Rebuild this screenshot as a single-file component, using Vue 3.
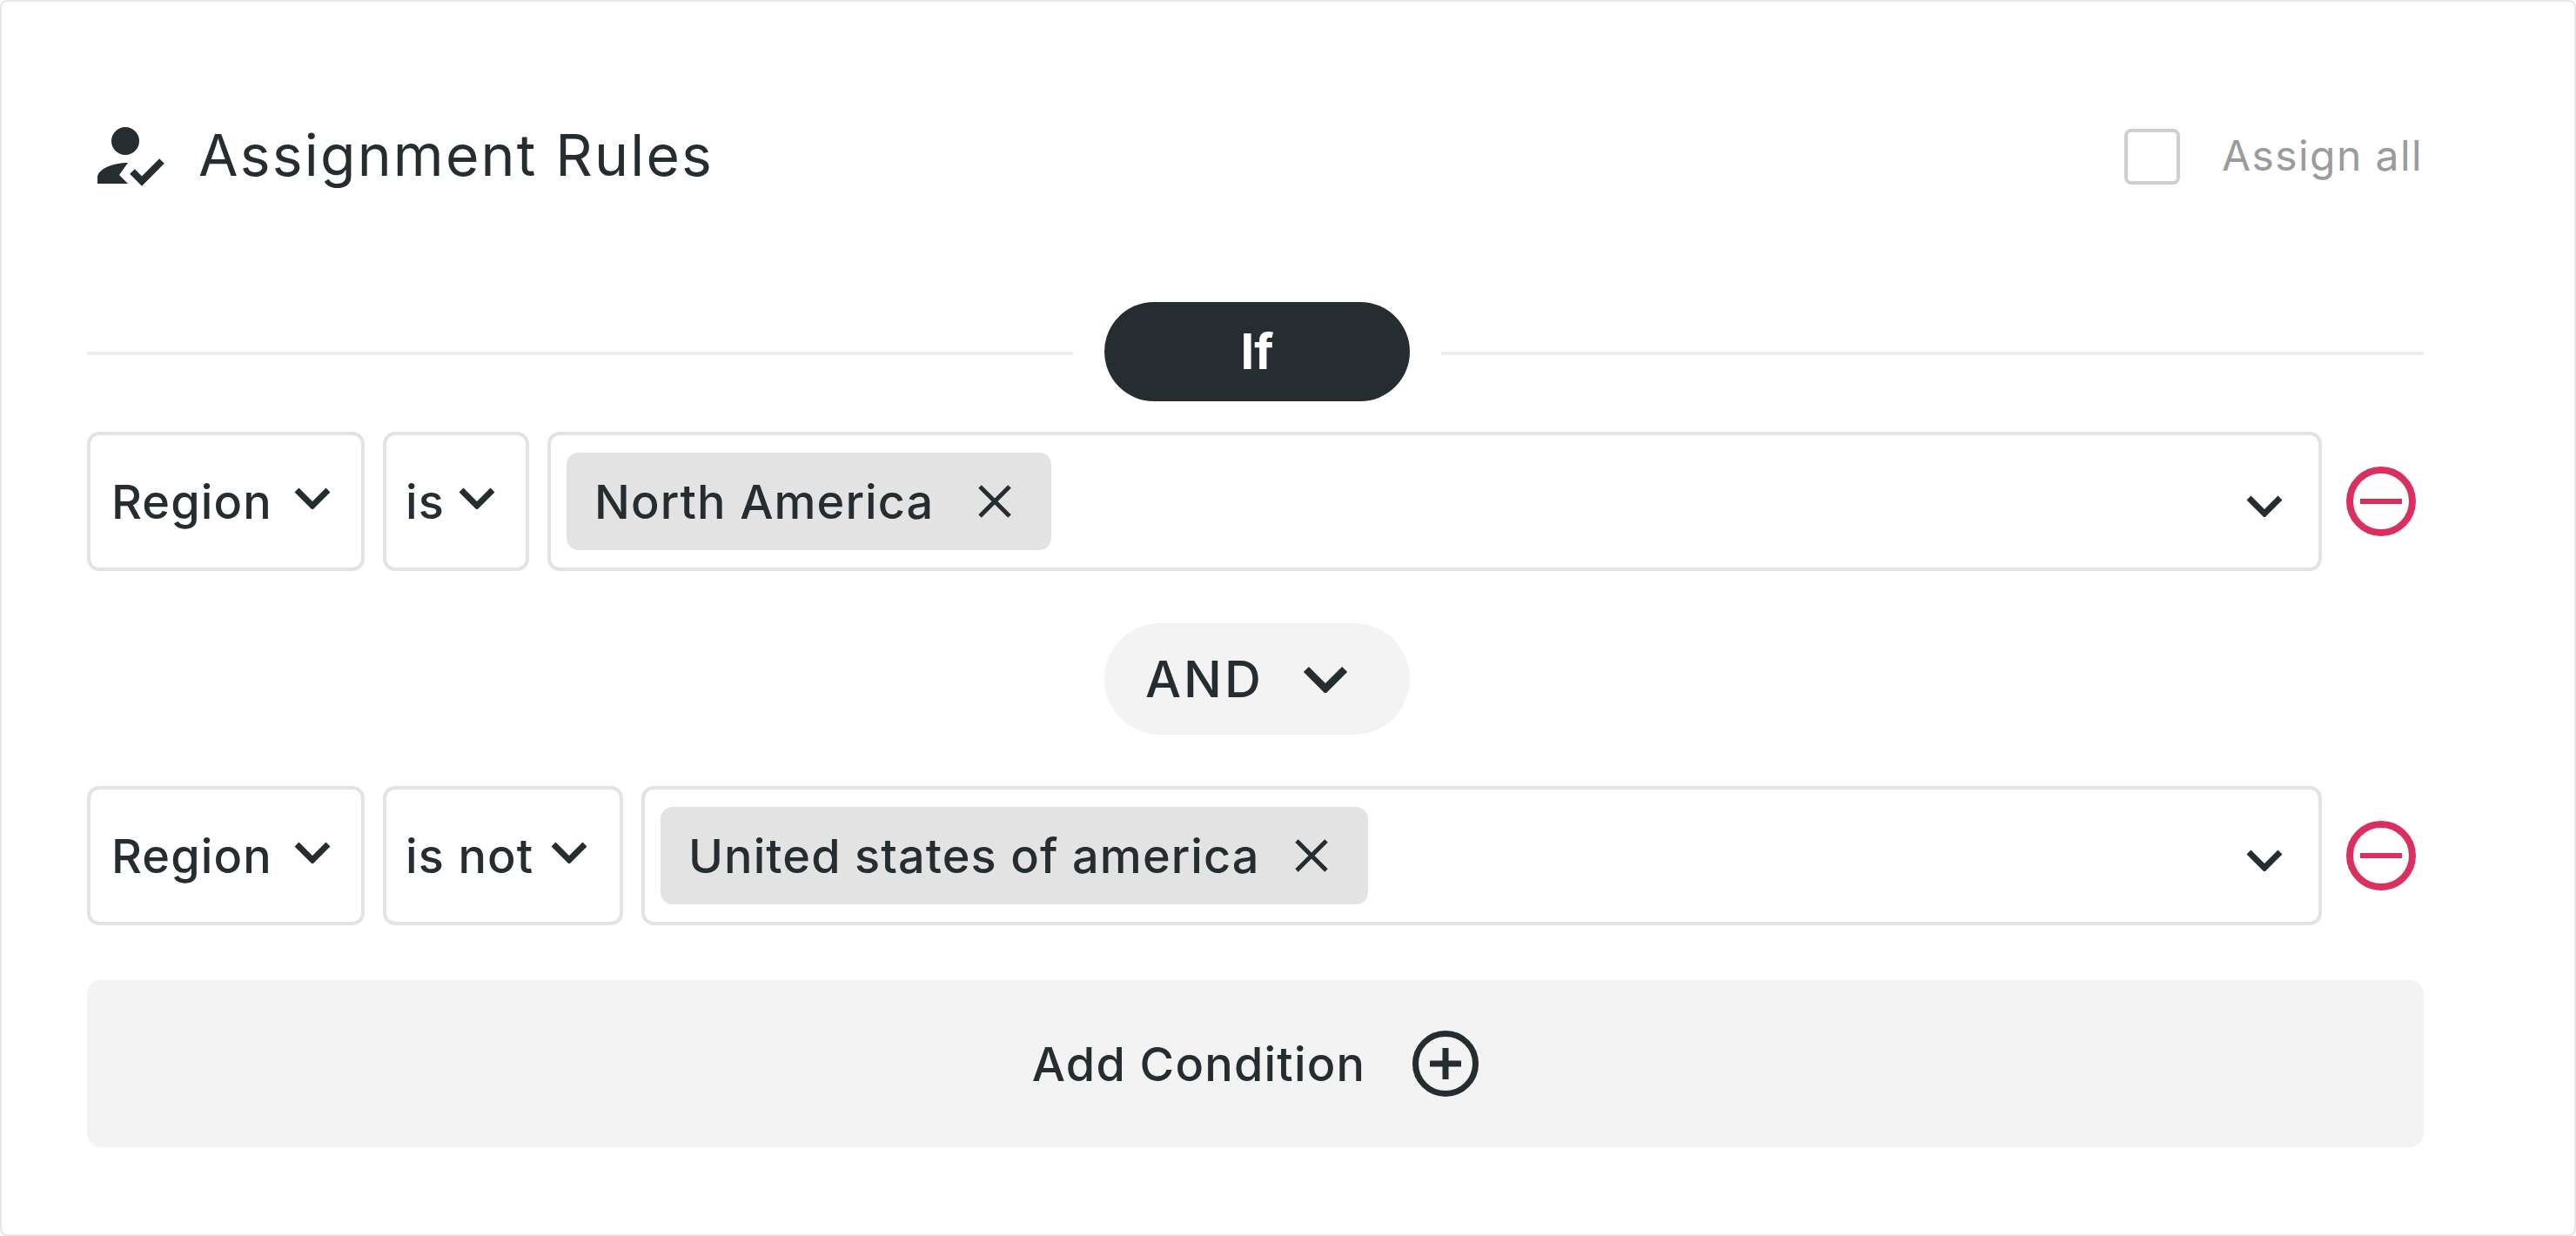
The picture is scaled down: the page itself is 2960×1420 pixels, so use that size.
<template>
  <div class="card">
    <div class="header">
      <svg class="rules-icon" viewBox="100 145 92 72">
        <circle cx="144" cy="163" r="16" fill="#252d30" />
        <path d="M112 212 V205 C112 195 130 188 147 188 L137 202 L147 212 Z" fill="#252d30" />
        <path d="M152 198 L163 209 L186 186" fill="none" stroke="#252d30" stroke-width="8" />
      </svg>
      <span class="title">Assignment Rules</span>
      <label class="assign-all">
        <span class="checkbox"></span>
        <span class="assign-text">Assign all</span>
      </label>
    </div>

    <div class="if-row">
      <div class="line line-left"></div>
      <div class="if-pill">If</div>
      <div class="line"></div>
    </div>

    <div class="condition first">
      <div class="select field-wide">
        <span>Region</span>
        <svg class="chev" viewBox="0 0 44 26"><path d="M4 4 L22 22 L40 4" /></svg>
      </div>
      <div class="select op-is">
        <span>is</span>
        <svg class="chev" viewBox="0 0 44 26"><path d="M4 4 L22 22 L40 4" /></svg>
      </div>
      <div class="values">
        <div class="chip chip-na">
          <span>North America</span>
          <svg class="chip-x" viewBox="0 0 40 40"><path d="M3 3 L37 37 M37 3 L3 37" /></svg>
        </div>
        <svg class="chev values-chev" viewBox="0 0 44 26"><path d="M4 4 L22 22 L40 4" /></svg>
      </div>
      <svg class="remove" viewBox="0 0 80 80">
        <circle cx="40" cy="40" r="36" />
        <path d="M16 40 H64" />
      </svg>
    </div>

    <div class="and-row">
      <div class="and-pill">
        <span>AND</span>
        <svg class="chev and-chev" viewBox="0 0 44 26"><path d="M4 4 L22 22 L40 4" /></svg>
      </div>
    </div>

    <div class="condition second">
      <div class="select field-wide">
        <span>Region</span>
        <svg class="chev" viewBox="0 0 44 26"><path d="M4 4 L22 22 L40 4" /></svg>
      </div>
      <div class="select op-not">
        <span>is not</span>
        <svg class="chev" viewBox="0 0 44 26"><path d="M4 4 L22 22 L40 4" /></svg>
      </div>
      <div class="values">
        <div class="chip chip-us">
          <span>United states of america</span>
          <svg class="chip-x" viewBox="0 0 40 40"><path d="M3 3 L37 37 M37 3 L3 37" /></svg>
        </div>
        <svg class="chev values-chev" viewBox="0 0 44 26"><path d="M4 4 L22 22 L40 4" /></svg>
      </div>
      <svg class="remove" viewBox="0 0 80 80">
        <circle cx="40" cy="40" r="36" />
        <path d="M16 40 H64" />
      </svg>
    </div>

    <div class="add-condition">
      <span>Add Condition</span>
      <svg class="add-icon" viewBox="0 0 76 76">
        <circle cx="38" cy="38" r="34.5" />
        <path d="M38 20 V56 M20 38 H56" />
      </svg>
    </div>
  </div>
</template>

<script setup>
</script>

<style>
html,
body {
  margin: 0;
  background: #fff;
}
</style>

<style scoped>
.card {
  box-sizing: border-box;
  width: 2960px;
  height: 1420px;
  padding: 146px 173px 0 98px;
  border: 2px solid #e6e6e6;
  border-radius: 8px;
  background: #fff;
  color: #252d30;
  font-family: Inter, "Open Sans", sans-serif;
}

.header {
  display: flex;
  align-items: center;
  height: 64px;
}

.rules-icon {
  width: 92px;
  height: 72px;
  flex: none;
}

.title {
  margin-left: 36px;
  margin-bottom: 4px;
  font-size: 66px;
  font-weight: 400;
  letter-spacing: 2.2px;
}

.assign-all {
  display: flex;
  align-items: center;
  margin-left: auto;
  margin-right: 1px;
}

.checkbox {
  box-sizing: border-box;
  width: 64px;
  height: 64px;
  border: 4px solid #cfcfcf;
  border-radius: 8px;
}

.assign-text {
  margin-left: 48px;
  margin-bottom: 4px;
  color: #9b9b9b;
  font-size: 48px;
  letter-spacing: 1.4px;
}

.if-row {
  display: flex;
  align-items: center;
  gap: 36px;
  margin-top: 135px;
}

.line {
  flex: 1 0 0;
  height: 4px;
  margin-top: 4px;
  background: #ededed;
}

.line-left {
  flex-basis: 4px;
}

.if-pill {
  display: flex;
  align-items: center;
  justify-content: center;
  width: 351px;
  height: 114px;
  border-radius: 57px;
  background: #252d30;
  color: #fff;
  font-size: 56px;
  font-weight: 700;
}

.condition {
  display: flex;
  align-items: center;
  gap: 21px;
}

.condition.first {
  margin-top: 35px;
}

.condition.second {
  margin-top: 59px;
}

.select,
.values {
  box-sizing: border-box;
  display: flex;
  align-items: center;
  height: 160px;
  border: 4px solid #e3e3e3;
  border-radius: 14px;
  font-size: 54px;
  font-weight: 550;
  letter-spacing: 1.1px;
}

.select {
  justify-content: space-between;
  flex: none;
  padding: 0 34px 0 24px;
}

.select .chev {
  margin-bottom: 8px;
}

.field-wide {
  width: 319px;
}

.op-is {
  width: 168px;
  padding-left: 22px;
}

.op-not {
  width: 276px;
  padding-left: 22px;
  padding-right: 36px;
}

.values {
  flex: 1;
  min-width: 0;
  padding: 0 40px 0 18px;
}

.chip {
  box-sizing: border-box;
  display: flex;
  align-items: center;
  justify-content: space-between;
  height: 112px;
  padding: 0 45px 0 32px;
  border-radius: 14px;
  background: #e3e3e3;
}

.chip-na {
  width: 557px;
}

.chip-us {
  width: 813px;
}

.chip-x {
  width: 40px;
  height: 40px;
  fill: none;
  stroke: #252d30;
  stroke-width: 5;
}

.chev {
  flex: none;
  width: 44px;
  height: 26px;
  fill: none;
  stroke: #252d30;
  stroke-width: 7;
}

.values-chev {
  margin-left: auto;
  margin-top: 10px;
}

.remove {
  flex: none;
  width: 80px;
  height: 80px;
  margin-left: 7px;
  margin-right: 9px;
  fill: none;
  stroke: #d9305f;
  stroke-width: 8;
}

.remove path {
  stroke-width: 6;
}

.and-row {
  display: flex;
  justify-content: center;
  margin-top: 60px;
}

.and-pill {
  box-sizing: border-box;
  display: flex;
  align-items: center;
  width: 351px;
  height: 128px;
  margin-left: 4px;
  padding-left: 47px;
  border-radius: 64px;
  background: #f3f3f3;
  font-size: 58px;
  font-weight: 550;
  letter-spacing: 3px;
}

.and-chev {
  width: 54px;
  height: 32px;
  margin-left: 44px;
  stroke-width: 7;
}

.add-condition {
  display: flex;
  align-items: center;
  justify-content: center;
  height: 192px;
  margin-top: 63px;
  border-radius: 16px;
  background: #f3f3f3;
  font-size: 54px;
  font-weight: 550;
  letter-spacing: 1.2px;
}

.add-icon {
  width: 76px;
  height: 76px;
  margin-left: 54px;
  fill: none;
  stroke: #252d30;
  stroke-width: 7;
}
</style>
